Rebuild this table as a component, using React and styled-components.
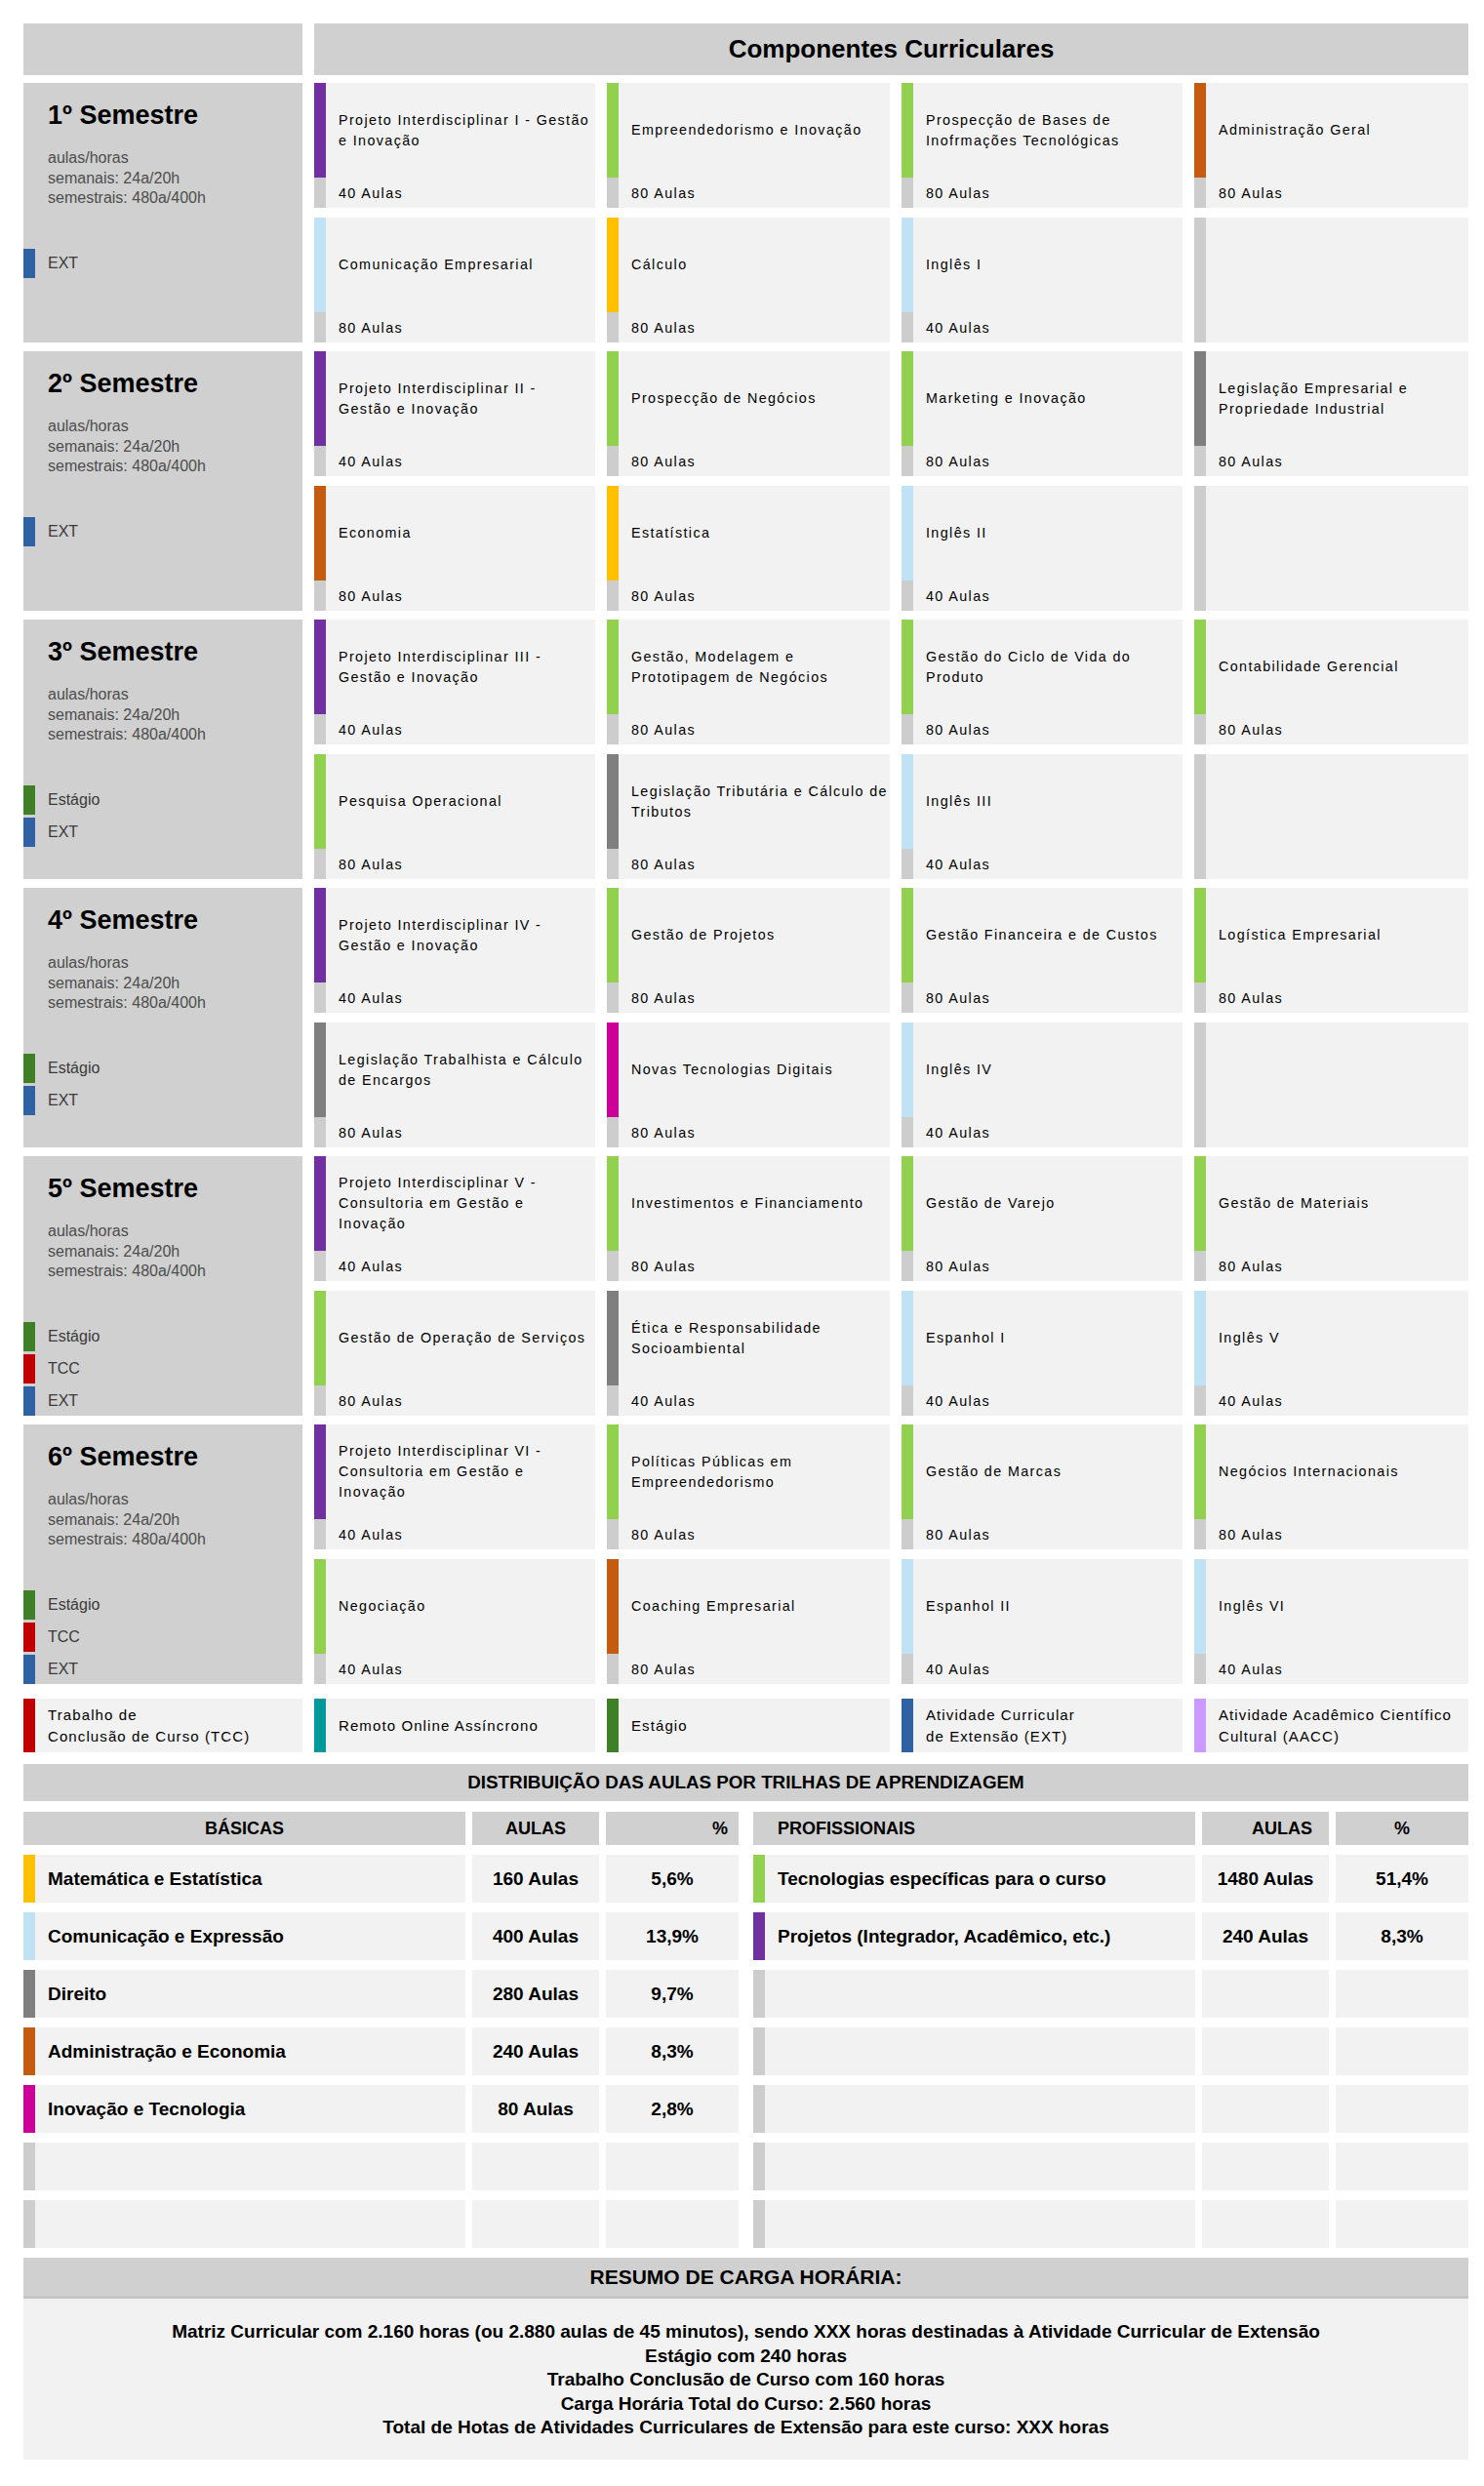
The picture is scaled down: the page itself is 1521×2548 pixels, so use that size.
import React from 'react'
import styled, { createGlobalStyle } from 'styled-components'

const colors = {
    purple: '#7030a0',
    green: '#92d050',
    orange: '#c55a11',
    sky: '#bfe3f4',
    yellow: '#ffc000',
    gray: '#7f7f7f',
    magenta: '#cc0099',
    teal: '#00999a',
    forest: '#3f7f27',
    red: '#c00000',
    blue: '#2e62a2',
    lilac: '#cc99ff',
    empty: '#cdcdcd',
}

const GlobalStyle = createGlobalStyle`
    body{
        margin: 0;
        background: #fff;
        font-family: "Liberation Sans", Arial, sans-serif;
        color: #000;
    }
`

const Page = styled.div`
    width: 1481px;
    padding: 24px 16px 28px 24px;
`

const FiveCols = styled.div`
    display: grid;
    grid-template-columns: 286px 288px 290px 288px 1fr;
    column-gap: 12px;
`

const Header = styled(FiveCols)`
    height: 53px;
    margin-bottom: 8px;
`

const HeaderBlank = styled.div`
    background-color: #d0d0d0;
`

const HeaderTitle = styled.div`
    grid-column: span 4;
    background-color: #d0d0d0;
    display: flex;
    align-items: center;
    justify-content: center;
    font-size: 26px;
    font-weight: bold;
`

const SemesterList = styled.div`
    display: flex;
    flex-direction: column;
    gap: 9px;
`

const SemesterRow = styled(FiveCols)`
    grid-template-rows: 128px 128px;
    row-gap: 10px;
`

const SemesterBox = styled.div`
    grid-row: span 2;
    background-color: #d0d0d0;
    padding-top: 18px;
    display: flex;
    flex-direction: column;
`

const SemesterTitle = styled.h2`
    margin: 0;
    padding-left: 25px;
    font-size: 27px;
    line-height: 30px;
    font-weight: bold;
`

const SemesterInfo = styled.p`
    margin: 19px 0 0;
    padding-left: 25px;
    font-size: 16px;
    line-height: 20.5px;
    color: #4d4d4d;
`

const Markers = styled.ul`
    list-style: none;
    margin: 41px 0 0;
    padding: 0;
    display: flex;
    flex-direction: column;
    gap: 3px;
`

const Marker = styled.li`
    height: 30px;
    display: flex;
    align-items: center;
    font-size: 16px;
    color: #3a3a3a;

    &::before{
        content: "";
        width: 12px;
        height: 100%;
        margin-right: 13px;
        background-color: ${p => p.$color};
    }
`

const Card = styled.div`
    display: grid;
    grid-template-columns: 12px 1fr;
    grid-template-rows: 97px 1fr;
    background-color: #f2f2f2;
    font-size: 14.3px;
    letter-spacing: 1.4px;
    color: #000;
`

const BarTop = styled.div`
    background-color: ${p => p.$color};
`

const BarBottom = styled.div`
    background-color: ${colors.empty};
`

const CardTitle = styled.div`
    display: flex;
    align-items: center;
    padding-left: 13px;
    line-height: 21px;
    white-space: pre;
`

const CardAulas = styled.div`
    display: flex;
    align-items: center;
    padding-left: 13px;
`

const Legend = styled(FiveCols)`
    margin-top: 15px;
`

const LegendItem = styled.div`
    height: 55px;
    display: grid;
    grid-template-columns: 12px 1fr;
    background-color: #f2f2f2;

    &::before{
        content: "";
        background-color: ${p => p.$color};
    }

    span{
        display: flex;
        align-items: center;
        padding-left: 13px;
        font-size: 15px;
        line-height: 22px;
        letter-spacing: 1.1px;
        white-space: pre;
    }
`

const SectionBar = styled.div`
    margin-top: 12px;
    height: 38px;
    background-color: #d0d0d0;
    display: flex;
    align-items: center;
    justify-content: center;
    font-size: 18.8px;
    font-weight: bold;
`

const Tables = styled.div`
    margin-top: 11px;
    display: grid;
    grid-template-columns: 1fr 1fr;
    column-gap: 15px;
`

const Half = styled.div`
    display: grid;
    grid-template-columns: 1fr 130px 136px;
    grid-template-rows: 34px;
    grid-auto-rows: 49px;
    column-gap: 7px;
    row-gap: 10px;
`

const HeadCell = styled.div`
    background-color: #d0d0d0;
    display: flex;
    align-items: center;
    justify-content: ${p => p.$align || 'center'};
    padding: ${p => p.$pad || '0'};
    font-size: 18px;
    font-weight: bold;
`

const TrackCell = styled.div`
    display: grid;
    grid-template-columns: 12px 1fr;
    background-color: #f2f2f2;

    &::before{
        content: "";
        background-color: ${p => p.$color};
    }

    span{
        display: flex;
        align-items: center;
        padding-left: 13px;
        font-size: 19px;
        font-weight: bold;
    }
`

const ValueCell = styled.div`
    background-color: #f2f2f2;
    display: flex;
    align-items: center;
    justify-content: center;
    font-size: 19px;
    font-weight: bold;
`

const SummaryHead = styled.div`
    margin-top: 10px;
    height: 42px;
    box-sizing: border-box;
    background-color: #d0d0d0;
    border-bottom: 3px solid #c6c6c6;
    display: flex;
    align-items: center;
    justify-content: center;
    font-size: 21px;
    font-weight: bold;
`

const SummaryBody = styled.div`
    background-color: #f2f2f2;
    padding: 22px 0 20px;
    text-align: center;
    font-size: 19px;
    line-height: 24.5px;
    font-weight: bold;

    p{
        margin: 0;
    }
`

const semesters = [
    {
        name: '1º Semestre',
        markers: ['EXT'],
        cards: [
            ['purple', 'Projeto Interdisciplinar I - Gestão\ne Inovação', 40],
            ['green', 'Empreendedorismo e Inovação', 80],
            ['green', 'Prospecção de Bases de\nInofrmações Tecnológicas', 80],
            ['orange', 'Administração Geral', 80],
            ['sky', 'Comunicação Empresarial', 80],
            ['yellow', 'Cálculo', 80],
            ['sky', 'Inglês I', 40],
            null,
        ],
    },
    {
        name: '2º Semestre',
        markers: ['EXT'],
        cards: [
            ['purple', 'Projeto Interdisciplinar II -\nGestão e Inovação', 40],
            ['green', 'Prospecção de Negócios', 80],
            ['green', 'Marketing e Inovação', 80],
            ['gray', 'Legislação Empresarial e\nPropriedade Industrial', 80],
            ['orange', 'Economia', 80],
            ['yellow', 'Estatística', 80],
            ['sky', 'Inglês II', 40],
            null,
        ],
    },
    {
        name: '3º Semestre',
        markers: ['Estágio', 'EXT'],
        cards: [
            ['purple', 'Projeto Interdisciplinar III -\nGestão e Inovação', 40],
            ['green', 'Gestão, Modelagem e\nPrototipagem de Negócios', 80],
            ['green', 'Gestão do Ciclo de Vida do\nProduto', 80],
            ['green', 'Contabilidade Gerencial', 80],
            ['green', 'Pesquisa Operacional', 80],
            ['gray', 'Legislação Tributária e Cálculo de\nTributos', 80],
            ['sky', 'Inglês III', 40],
            null,
        ],
    },
    {
        name: '4º Semestre',
        markers: ['Estágio', 'EXT'],
        cards: [
            ['purple', 'Projeto Interdisciplinar IV -\nGestão e Inovação', 40],
            ['green', 'Gestão de Projetos', 80],
            ['green', 'Gestão Financeira e de Custos', 80],
            ['green', 'Logística Empresarial', 80],
            ['gray', 'Legislação Trabalhista e Cálculo\nde Encargos', 80],
            ['magenta', 'Novas Tecnologias Digitais', 80],
            ['sky', 'Inglês IV', 40],
            null,
        ],
    },
    {
        name: '5º Semestre',
        markers: ['Estágio', 'TCC', 'EXT'],
        cards: [
            ['purple', 'Projeto Interdisciplinar V -\nConsultoria em Gestão e\nInovação', 40],
            ['green', 'Investimentos e Financiamento', 80],
            ['green', 'Gestão de Varejo', 80],
            ['green', 'Gestão de Materiais', 80],
            ['green', 'Gestão de Operação de Serviços', 80],
            ['gray', 'Ética e Responsabilidade\nSocioambiental', 40],
            ['sky', 'Espanhol I', 40],
            ['sky', 'Inglês V', 40],
        ],
    },
    {
        name: '6º Semestre',
        markers: ['Estágio', 'TCC', 'EXT'],
        cards: [
            ['purple', 'Projeto Interdisciplinar VI -\nConsultoria em Gestão e\nInovação', 40],
            ['green', 'Políticas Públicas em\nEmpreendedorismo', 80],
            ['green', 'Gestão de Marcas', 80],
            ['green', 'Negócios Internacionais', 80],
            ['green', 'Negociação', 40],
            ['orange', 'Coaching Empresarial', 80],
            ['sky', 'Espanhol II', 40],
            ['sky', 'Inglês VI', 40],
        ],
    },
]

const markerColors = { 'Estágio': colors.forest, 'TCC': colors.red, 'EXT': colors.blue }

const legend = [
    ['red', 'Trabalho de\nConclusão de Curso (TCC)'],
    ['teal', 'Remoto Online Assíncrono'],
    ['forest', 'Estágio'],
    ['blue', 'Atividade Curricular\nde Extensão (EXT)'],
    ['lilac', 'Atividade Acadêmico Científico\nCultural (AACC)'],
]

const basicas = [
    ['yellow', 'Matemática e Estatística', '160 Aulas', '5,6%'],
    ['sky', 'Comunicação e Expressão', '400 Aulas', '13,9%'],
    ['gray', 'Direito', '280 Aulas', '9,7%'],
    ['orange', 'Administração e Economia', '240 Aulas', '8,3%'],
    ['magenta', 'Inovação e Tecnologia', '80 Aulas', '2,8%'],
    ['empty', '', '', ''],
    ['empty', '', '', ''],
]

const profissionais = [
    ['green', 'Tecnologias específicas para o curso', '1480 Aulas', '51,4%'],
    ['purple', 'Projetos (Integrador, Acadêmico, etc.)', '240 Aulas', '8,3%'],
    ['empty', '', '', ''],
    ['empty', '', '', ''],
    ['empty', '', '', ''],
    ['empty', '', '', ''],
    ['empty', '', '', ''],
]

const resumo = [
    'Matriz Curricular com 2.160 horas (ou 2.880 aulas de 45 minutos), sendo XXX horas destinadas à Atividade Curricular de Extensão',
    'Estágio com 240 horas',
    'Trabalho Conclusão de Curso com 160 horas',
    'Carga Horária Total do Curso: 2.560 horas',
    'Total de Hotas de Atividades Curriculares de Extensão para este curso: XXX horas',
]

const Subject = ({ item }) => {
    if (!item) {
        return (
            <Card>
                <BarTop $color={colors.empty} />
                <CardTitle />
                <BarBottom />
                <CardAulas />
            </Card>
        )
    }
    const [color, title, aulas] = item
    return (
        <Card>
            <BarTop $color={colors[color]} />
            <CardTitle>{title}</CardTitle>
            <BarBottom />
            <CardAulas>{aulas} Aulas</CardAulas>
        </Card>
    )
}

const TrackTable = ({ title, rows, headers }) => (
    <Half>
        <HeadCell $align={headers[0].align} $pad={headers[0].pad}>{title}</HeadCell>
        <HeadCell $align={headers[1].align} $pad={headers[1].pad}>AULAS</HeadCell>
        <HeadCell $align={headers[2].align} $pad={headers[2].pad}>%</HeadCell>
        {rows.map((row, i) => (
            <React.Fragment key={i}>
                <TrackCell $color={colors[row[0]]}><span>{row[1]}</span></TrackCell>
                <ValueCell>{row[2]}</ValueCell>
                <ValueCell>{row[3]}</ValueCell>
            </React.Fragment>
        ))}
    </Half>
)

const App = () => {
    return (
        <>
            <GlobalStyle />
            <Page>
                <Header>
                    <HeaderBlank />
                    <HeaderTitle>Componentes Curriculares</HeaderTitle>
                </Header>

                <SemesterList>
                    {semesters.map((sem) => (
                        <SemesterRow key={sem.name}>
                            <SemesterBox>
                                <SemesterTitle>{sem.name}</SemesterTitle>
                                <SemesterInfo>
                                    aulas/horas<br />
                                    semanais: 24a/20h<br />
                                    semestrais: 480a/400h
                                </SemesterInfo>
                                <Markers>
                                    {sem.markers.map(m => (
                                        <Marker key={m} $color={markerColors[m]}>{m}</Marker>
                                    ))}
                                </Markers>
                            </SemesterBox>
                            {sem.cards.map((item, i) => (
                                <Subject key={i} item={item} />
                            ))}
                        </SemesterRow>
                    ))}
                </SemesterList>

                <Legend>
                    {legend.map(([color, text]) => (
                        <LegendItem key={text} $color={colors[color]}>
                            <span>{text}</span>
                        </LegendItem>
                    ))}
                </Legend>

                <SectionBar>DISTRIBUIÇÃO DAS AULAS POR TRILHAS DE APRENDIZAGEM</SectionBar>

                <Tables>
                    <TrackTable
                        title="BÁSICAS"
                        rows={basicas}
                        headers={[{}, {}, { align: 'flex-end', pad: '0 11px 0 0' }]}
                    />
                    <TrackTable
                        title="PROFISSIONAIS"
                        rows={profissionais}
                        headers={[{ align: 'flex-start', pad: '0 0 0 25px' }, { align: 'flex-end', pad: '0 17px 0 0' }, {}]}
                    />
                </Tables>

                <SummaryHead>RESUMO DE CARGA HORÁRIA:</SummaryHead>
                <SummaryBody>
                    {resumo.map(line => <p key={line}>{line}</p>)}
                </SummaryBody>
            </Page>
        </>
    )
}

export default App
